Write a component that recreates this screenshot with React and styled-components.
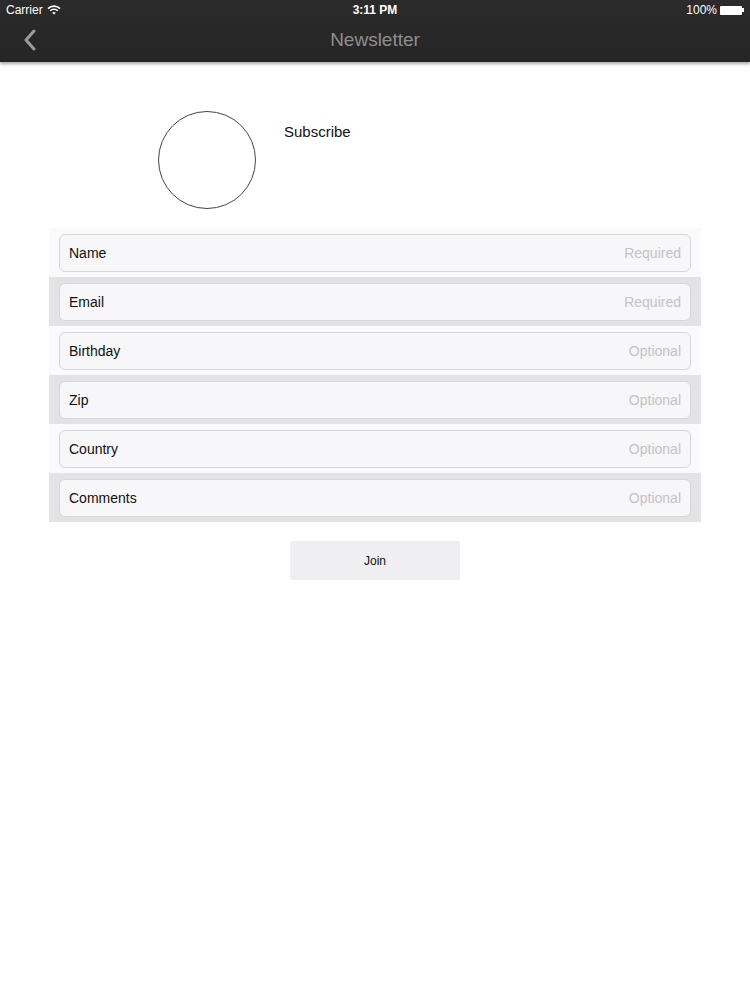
import React from 'react'
import styled, { createGlobalStyle } from 'styled-components'

const fields = [
  { label: 'Name', hint: 'Required' },
  { label: 'Email', hint: 'Required' },
  { label: 'Birthday', hint: 'Optional' },
  { label: 'Zip', hint: 'Optional' },
  { label: 'Country', hint: 'Optional' },
  { label: 'Comments', hint: 'Optional' },
]

const App = () => {
  return (
    <Page>
      <Global />
      <Header>
        <StatusBar>
          <Carrier>
            Carrier
            <svg width="14" height="10" viewBox="0 0 14 10">
              <path d="M1 3.6 A8.5 8.5 0 0 1 13 3.6" stroke="#fff" strokeWidth="1.6" fill="none" />
              <path d="M3.2 5.8 A5.4 5.4 0 0 1 10.8 5.8" stroke="#fff" strokeWidth="1.6" fill="none" />
              <path d="M7 9.6 L5.2 7.8 A2.6 2.6 0 0 1 8.8 7.8 Z" fill="#fff" />
            </svg>
          </Carrier>
          <Clock>3:11 PM</Clock>
          <Battery>
            100%
            <BatteryBody />
            <BatteryTip />
          </Battery>
        </StatusBar>
        <NavBar>
          <BackButton>
            <svg width="14" height="22" viewBox="0 0 14 22">
              <path d="M11 2 L3 11 L11 20" stroke="#9b9b9b" strokeWidth="3" fill="none" strokeLinecap="round" strokeLinejoin="round" />
            </svg>
          </BackButton>
          <Title>Newsletter</Title>
        </NavBar>
      </Header>

      <Intro>
        <Avatar />
        <Subscribe>Subscribe</Subscribe>
      </Intro>

      <Form>
        {fields.map((f, i) => (
          <Row key={f.label} $shaded={i % 2 === 1}>
            <Field>
              <Label>{f.label}</Label>
              <Hint>{f.hint}</Hint>
            </Field>
          </Row>
        ))}
      </Form>

      <Actions>
        <JoinButton>Join</JoinButton>
      </Actions>
    </Page>
  )
}

export default App

const Global = createGlobalStyle`
body{
  margin:0;
  background:#fff;
  font-family:"Liberation Sans", Arial, sans-serif;
}
`
const Page = styled.div`
width:750px;
min-height:1000px;
background:#fff;
`
const Header = styled.header`
height:62px;
background:linear-gradient(#2c2b2b, #262525);
box-shadow:0 2px 3px rgba(0,0,0,0.35);
display:flex;
flex-direction:column;
`
const StatusBar = styled.div`
height:20px;
display:flex;
align-items:center;
justify-content:space-between;
padding:0 6px;
color:#fff;
font-size:12px;
`
const Carrier = styled.div`
display:flex;
align-items:center;
gap:4px;
width:120px;
`
const Clock = styled.div`
font-weight:bold;
font-size:12px;
`
const Battery = styled.div`
width:120px;
display:flex;
align-items:center;
justify-content:flex-end;
`
const BatteryBody = styled.span`
width:22px;
height:9px;
margin-left:3px;
background:#fff;
border-radius:1px;
`
const BatteryTip = styled.span`
width:2px;
height:4px;
background:#fff;
`
const NavBar = styled.div`
flex:1;
display:flex;
align-items:center;
justify-content:center;
position:relative;
`
const BackButton = styled.div`
position:absolute;
left:23px;
top:9px;
`
const Title = styled.div`
color:#8e8e8e;
font-size:19px;
margin-top:-2px;
`
const Intro = styled.div`
display:flex;
align-items:flex-start;
padding:49px 0 0 158px;
height:149px;
box-sizing:border-box;
gap:28px;
`
const Avatar = styled.div`
width:96px;
height:96px;
border:1.3px solid #444;
border-radius:50%;
`
const Subscribe = styled.div`
font-size:15px;
color:#111;
margin-top:12px;
`
const Form = styled.div`
margin:17px 49px 0;
display:flex;
flex-direction:column;
`
const Row = styled.div`
height:49px;
box-sizing:border-box;
padding:6px 10px 5px;
background:${p => (p.$shaded ? '#e3e2e5' : '#faf9fb')};
`
const Field = styled.div`
height:100%;
box-sizing:border-box;
border:1px solid #d7d6d9;
border-radius:6px;
background:#f7f6f8;
display:flex;
align-items:center;
justify-content:space-between;
padding:0 9px;
`
const Label = styled.span`
font-size:14px;
color:#111;
`
const Hint = styled.span`
font-size:14px;
color:#c4c3c6;
`
const Actions = styled.div`
display:flex;
justify-content:center;
margin-top:19px;
`
const JoinButton = styled.button`
width:170px;
height:39px;
border:none;
border-radius:3px;
background:#efeff1;
font-family:"Liberation Sans", Arial, sans-serif;
font-size:12px;
color:#111;
`
